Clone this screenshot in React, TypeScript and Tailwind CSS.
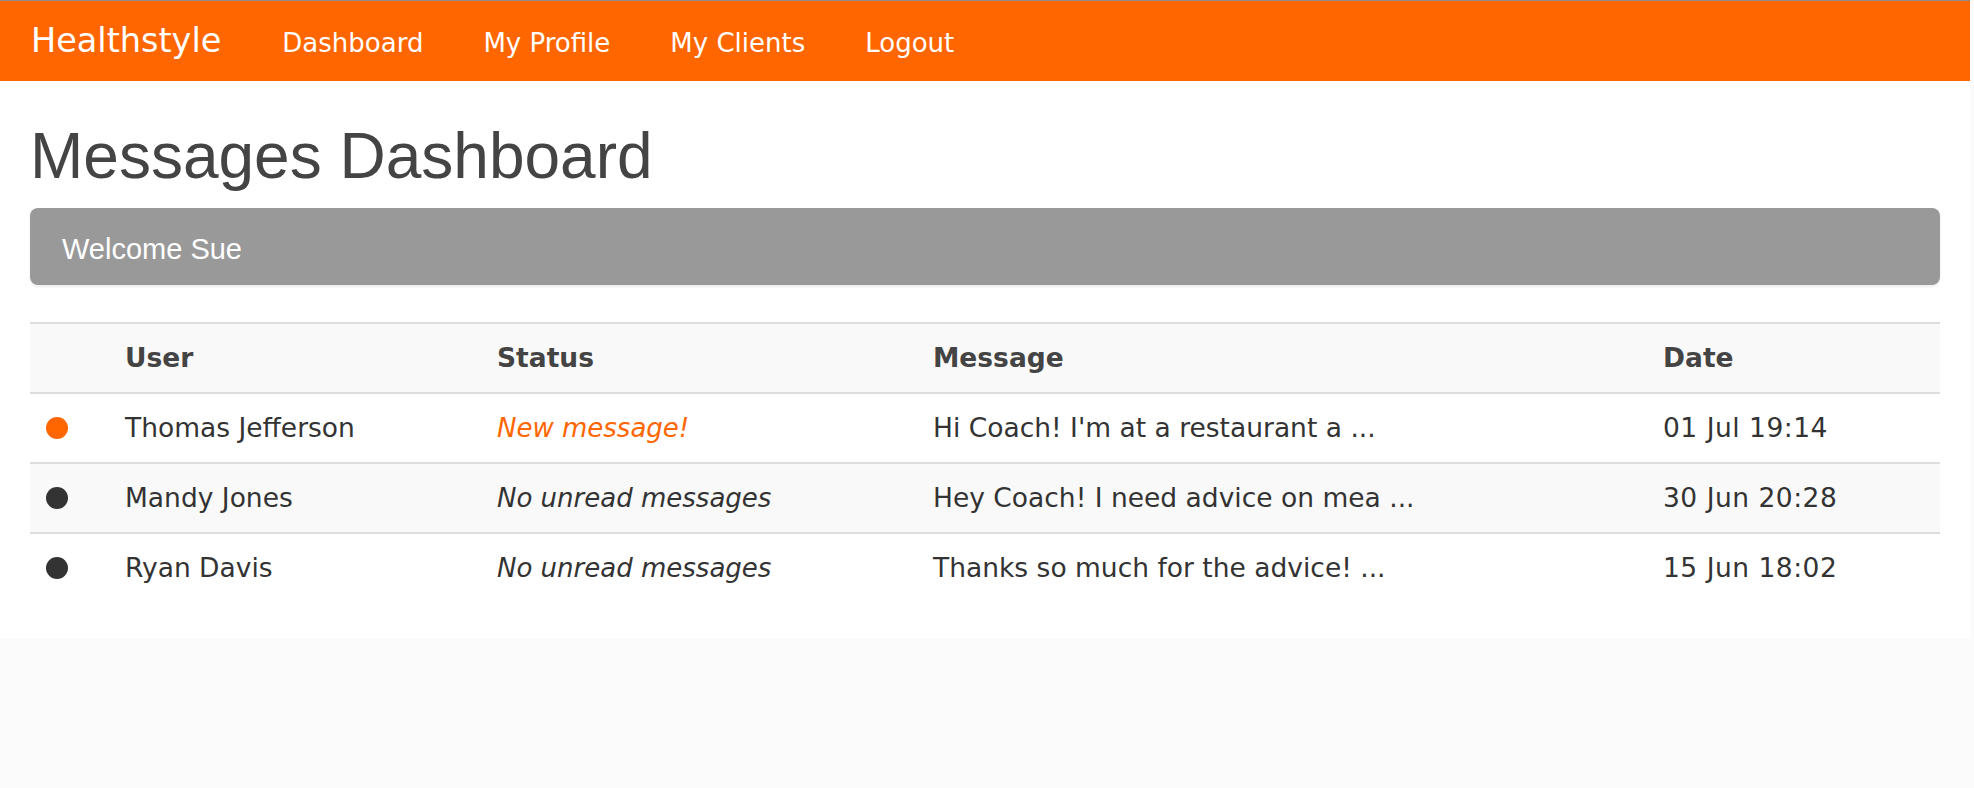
import React from "react";

type Row = {
  user: string;
  isNew: boolean;
  message: string;
  date: string;
};

const rows: Row[] = [
  { user: "Thomas Jefferson", isNew: true, message: "Hi Coach! I'm at a restaurant a ...", date: "01 Jul 19:14" },
  { user: "Mandy Jones", isNew: false, message: "Hey Coach! I need advice on mea ...", date: "30 Jun 20:28" },
  { user: "Ryan Davis", isNew: false, message: "Thanks so much for the advice! ...", date: "15 Jun 18:02" },
];

export default function App() {
  return (
    <div className="min-h-screen bg-[#fbfbfb]">
      <div className="mr-[4px]">
        <nav className="h-[81px] border-t border-[#8c8c8c] bg-[#ff6600] flex items-start pl-[31px] pr-[30px] font-['DejaVu_Sans',Verdana,sans-serif] text-white">
          <span className="text-[33.5px] pr-[31px] leading-[40px] mt-[20px]">Healthstyle</span>
          <a className="text-[26px] px-[30px] leading-[40px] mt-[22px]">Dashboard</a>
          <a className="text-[26px] px-[30px] leading-[40px] mt-[22px]">My Profile</a>
          <a className="text-[26px] px-[30px] leading-[40px] mt-[22px]">My Clients</a>
          <a className="text-[26px] px-[30px] leading-[40px] mt-[22px]">Logout</a>
        </nav>
        <div className="bg-white px-[30px] pt-[40px] pb-[36px]">
          <h1 className="font-['Liberation_Sans',Arial,sans-serif] text-[64px] leading-[70px] text-[#444] font-normal mb-[17px]">
            Messages Dashboard
          </h1>
          <div className="h-[77px] rounded-[8px] bg-[#999999] flex items-center px-[32px] pt-[4px] shadow-[0_2px_3px_rgba(0,0,0,0.07)] mb-[37px]">
            <span className="font-['Liberation_Sans',Arial,sans-serif] text-[29px] leading-[36px] text-white">Welcome Sue</span>
          </div>
          <table className="w-full table-fixed border-separate border-spacing-0 font-['DejaVu_Sans',Verdana,sans-serif] text-[26.5px] leading-[36px] text-[#333]">
            <colgroup>
              <col className="w-[79px]" />
              <col className="w-[372px]" />
              <col className="w-[436px]" />
              <col className="w-[730px]" />
              <col />
            </colgroup>
            <thead>
              <tr className="bg-[#f9f9f9]">
                <th className="border-t-2 border-[#dddddd] p-[16px]"></th>
                <th className="border-t-2 border-[#dddddd] p-[16px] text-left font-bold text-[#444]">User</th>
                <th className="border-t-2 border-[#dddddd] p-[16px] text-left font-bold text-[#444]">Status</th>
                <th className="border-t-2 border-[#dddddd] p-[16px] text-left font-bold text-[#444]">Message</th>
                <th className="border-t-2 border-[#dddddd] p-[16px] text-left font-bold text-[#444]">Date</th>
              </tr>
            </thead>
            <tbody>
              {rows.map((r, i) => (
                <tr key={r.user} className={i % 2 === 1 ? "bg-[#f9f9f9]" : "bg-white"}>
                  <td className="border-t-2 border-[#dddddd] p-[16px]">
                    <div className="h-[36px] flex items-center">
                      <span className={r.isNew ? "block w-[22px] h-[22px] rounded-full bg-[#ff6600]" : "block w-[22px] h-[22px] rounded-full bg-[#333333]"} />
                    </div>
                  </td>
                  <td className="border-t-2 border-[#dddddd] p-[16px] whitespace-nowrap">{r.user}</td>
                  <td className={r.isNew ? "border-t-2 border-[#dddddd] p-[16px] italic text-[26px] text-[#ff6600] whitespace-nowrap" : "border-t-2 border-[#dddddd] p-[16px] italic text-[26px] whitespace-nowrap"}>
                    {r.isNew ? "New message!" : "No unread messages"}
                  </td>
                  <td className="border-t-2 border-[#dddddd] p-[16px] whitespace-nowrap">{r.message}</td>
                  <td className="border-t-2 border-[#dddddd] p-[16px] whitespace-nowrap tracking-[0.5px]">{r.date}</td>
                </tr>
              ))}
            </tbody>
          </table>
        </div>
      </div>
    </div>
  );
}
